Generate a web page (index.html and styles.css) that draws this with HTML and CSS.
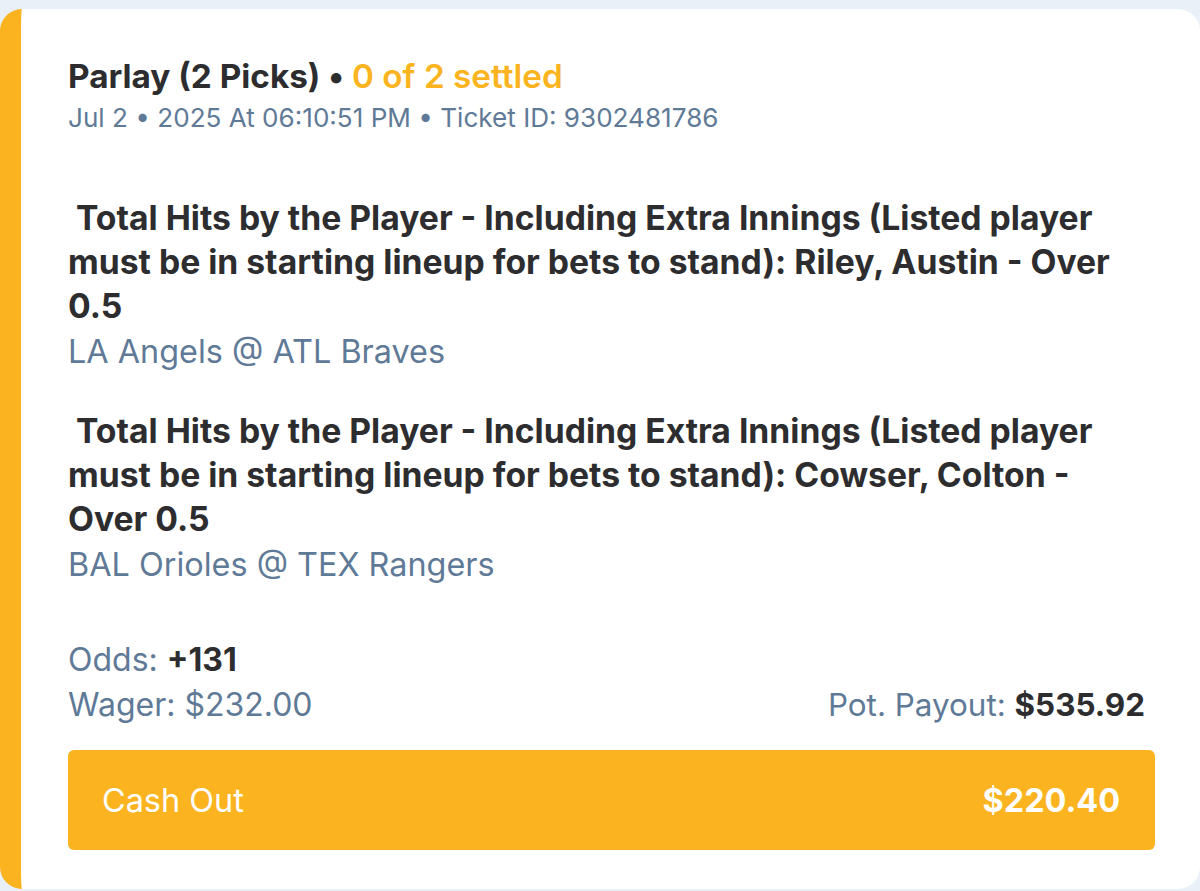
FILE: index.html
```html
<!DOCTYPE html>
<html lang="en">
<head>
<meta charset="utf-8">
<title>Parlay Ticket</title>
<link rel="stylesheet" href="styles.css">
</head>
<body>
<div class="page">
  <section class="ticket">
    <header class="ticket-head">
      <h1 class="ticket-title">Parlay (2 Picks) • <span class="settled">0 of 2 settled</span></h1>
      <p class="ticket-meta">Jul 2 • 2025 At 06:10:51 PM • Ticket ID: 9302481786</p>
    </header>

    <div class="picks">
      <div class="pick">
        <p class="pick-market">&nbsp;Total Hits by the Player - Including Extra Innings (Listed player must be in starting lineup for bets to stand): Riley, Austin - Over 0.5</p>
        <p class="pick-event">LA Angels @ ATL Braves</p>
      </div>
      <div class="pick">
        <p class="pick-market">&nbsp;Total Hits by the Player - Including Extra Innings (Listed player must be in starting lineup for bets to stand): Cowser, Colton - Over 0.5</p>
        <p class="pick-event">BAL Orioles @ TEX Rangers</p>
      </div>
    </div>

    <div class="summary">
      <div class="summary-row">
        <span class="label">Odds: <b class="value">+131</b></span>
      </div>
      <div class="summary-row">
        <span class="label">Wager: $232.00</span>
        <span class="label label-payout">Pot. Payout: <b class="value">$535.92</b></span>
      </div>
    </div>

    <button class="cashout" type="button">
      <span class="cashout-label">Cash Out</span>
      <span class="cashout-amount">$220.40</span>
    </button>
  </section>
</div>
</body>
</html>
```

FILE: styles.css
```css
* { box-sizing: border-box; }

html, body {
  margin: 0;
  padding: 0;
}

body {
  background: #e9f0f8;
  font-family: "Inter", "Lato", "Liberation Sans", sans-serif;
  color: #2d2d2f;
  width: 1200px;
  height: 891px;
  overflow: hidden;
}

.page {
  padding-top: 9px;
}

.ticket {
  background: #ffffff;
  border-left: 21px solid #fbb420;
  border-radius: 22px;
  height: 880px;
  padding: 47px 45px 0 47px;
}

.ticket-title {
  margin: 0;
  font-size: 33.3px;
  line-height: 40px;
  font-weight: 700;
  color: #2d2d2f;
  white-space: nowrap;
}

.settled {
  color: #fbb420;
  font-weight: 600;
}

.ticket-meta {
  margin: 0;
  font-size: 26.1px;
  line-height: 44px;
  color: #5f7a97;
  white-space: nowrap;
}

.picks {
  margin-top: 56px;
  padding-right: 10px;
  display: flex;
  flex-direction: column;
  gap: 33px;
}

.pick-market {
  margin: 0;
  font-size: 33.7px;
  line-height: 44px;
  font-weight: 700;
  color: #2d2d2f;
}

.pick-event {
  margin: 0;
  font-size: 32.4px;
  line-height: 48px;
  color: #5f7a97;
}

.summary {
  margin-top: 48px;
  padding-right: 10px;
  display: flex;
  flex-direction: column;
}

.summary-row {
  display: flex;
  justify-content: space-between;
  align-items: baseline;
  line-height: 45px;
  height: 45px;
}

.label {
  font-size: 32px;
  color: #5f7a97;
  white-space: nowrap;
}

.label-payout {
  font-size: 31.4px;
}

.value {
  font-weight: 700;
  color: #2d2d2f;
}

.cashout {
  margin-top: 23px;
  width: 100%;
  height: 100px;
  border: 0;
  border-radius: 6px;
  background: #fbb420;
  color: #ffffff;
  display: flex;
  align-items: center;
  justify-content: space-between;
  padding: 0 35px 0 34px;
  font-family: inherit;
  font-size: 32.4px;
}

.cashout-label { font-weight: 400; }
.cashout-amount { font-weight: 700; }
```
